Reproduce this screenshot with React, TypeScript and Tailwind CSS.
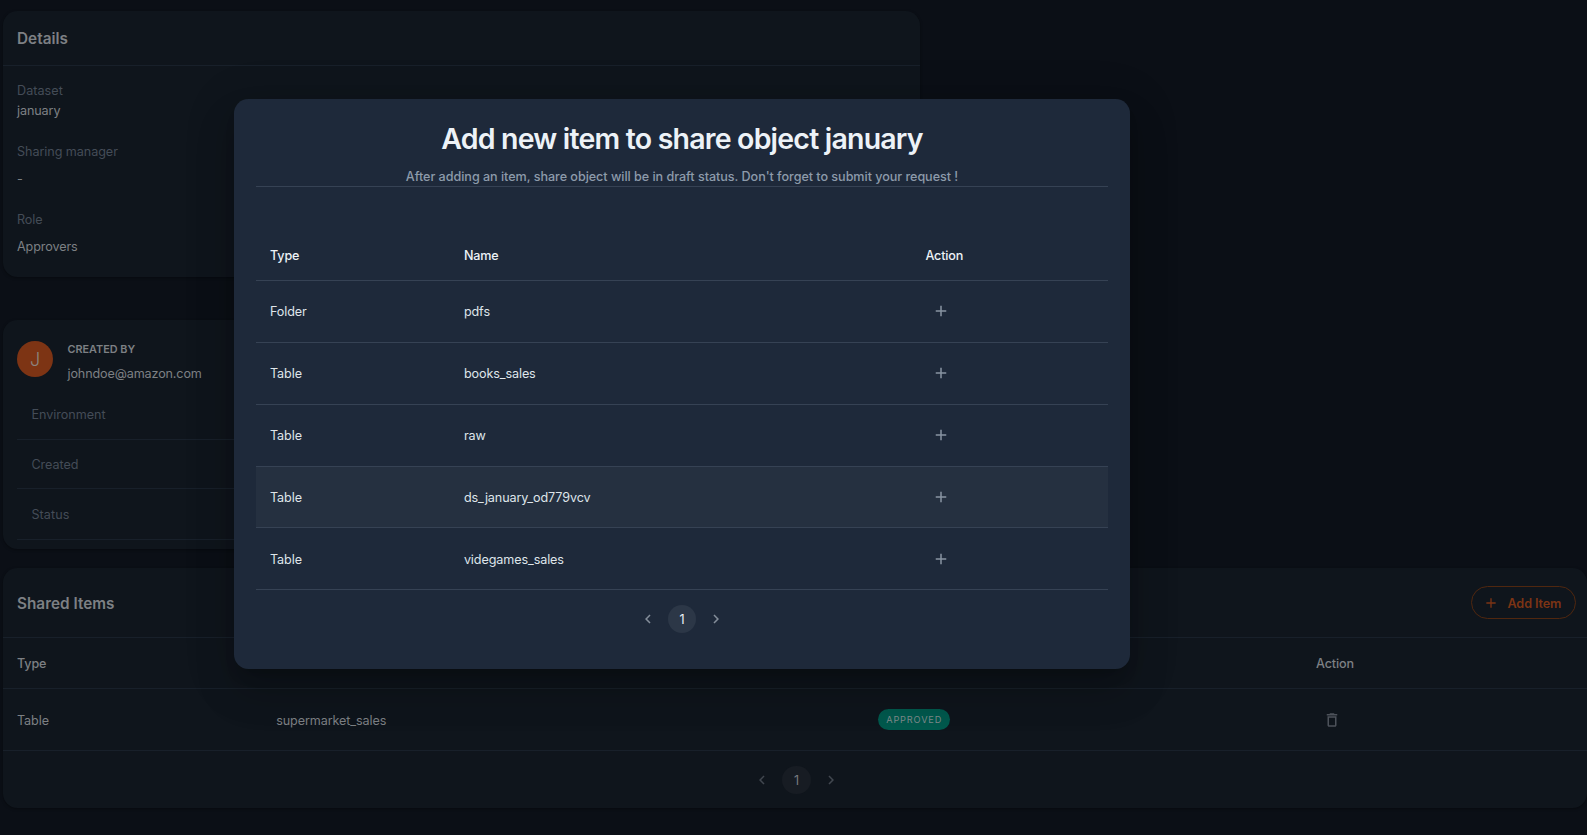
import React from 'react';

const sharedCols = 'grid grid-cols-[259.2px_602px_437.8px_1fr] items-center pl-[14px]';
const modalCols = 'grid grid-cols-[193.9px_461.5px_1fr] items-center pl-[14px]';

function Plus({ className }: { className: string }) {
  return (
    <svg viewBox="0 0 24 24" className={className} fill="currentColor">
      <path d="M19 13h-6v6h-2v-6H5v-2h6V5h2v6h6v2z" />
    </svg>
  );
}

function Trash() {
  return (
    <svg viewBox="0 0 24 24" className="h-[18px] w-[18px]" fill="currentColor">
      <path d="M6 19c0 1.1.9 2 2 2h8c1.1 0 2-.9 2-2V7H6v12zM8 9h8v10H8V9zm7.5-5-1-1h-5l-1 1H5v2h14V4z" />
    </svg>
  );
}

function Pagination({ arrow, circle }: { arrow: string; circle: string }) {
  return (
    <div className="flex items-center justify-center gap-[11px]">
      <svg viewBox="0 0 24 24" className={`h-[18px] w-[18px] ${arrow}`} fill="currentColor">
        <path d="M15.41 7.41L14 6l-6 6 6 6 1.41-1.41L10.83 12z" />
      </svg>
      <div className={`flex h-[28.5px] w-[28.5px] items-center justify-center rounded-full pt-[2px] ${circle}`}>1</div>
      <svg viewBox="0 0 24 24" className={`h-[18px] w-[18px] ${arrow}`} fill="currentColor">
        <path d="M10 6L8.59 7.41 13.17 12l-4.58 4.59L10 18l6-6z" />
      </svg>
    </div>
  );
}

const items = [
  { type: 'Folder', name: 'pdfs', row: 'h-[62px] pb-px' },
  { type: 'Table', name: 'books_sales', row: 'h-[62px] pb-px' },
  { type: 'Table', name: 'raw', row: 'h-[62px] pb-px' },
  { type: 'Table', name: 'ds_january_od779vcv', row: 'h-[61px] bg-[#253040]' },
  { type: 'Table', name: 'videgames_sales', row: 'h-[62px]' },
];

const card = 'rounded-[14.4px] bg-[#0f151c] shadow-[0_1px_3px_rgba(0,0,0,0.35)]';

export default function App() {
  return (
    <div className="relative h-[835px] w-[1587px] overflow-hidden bg-[#0b0f16] pl-[3px] pt-[11px] font-['Inter',sans-serif] text-[12.6px] leading-[20px] tracking-[-0.1px] text-[#7d8084]">
      <section className={`h-[266px] w-[917px] ${card}`}>
        <h2 className="flex h-[55px] items-center border-b border-[#18202a] pl-[14px] pt-[2px] text-[15.3px] font-semibold tracking-[0.02px]">Details</h2>
        <dl className="pl-[14px] pt-[14.5px]">
          <dt className="tracking-[0.04px] text-[#444c57]">Dataset</dt>
          <dd>january</dd>
          <dt className="mt-[21px] tracking-[-0.06px] text-[#444c57]">Sharing manager</dt>
          <dd className="mt-[7px]">-</dd>
          <dt className="mt-[21px] text-[#444c57]">Role</dt>
          <dd className="mt-[7px]">Approvers</dd>
        </dl>
      </section>

      <section className={`mt-[43px] h-[229px] w-[917px] px-[14px] pt-[21px] ${card}`}>
        <div className="flex h-[49px]">
          <div className="flex h-9 w-9 items-center justify-center rounded-full bg-[#7d3414] pt-[2px] text-[18px] font-light text-[#8b8480]">J</div>
          <div className="ml-[14.5px]">
            <div className="mt-[-1px] text-[10.8px] font-semibold tracking-[0.02px]">CREATED BY</div>
            <div className="mt-[4px] tracking-[-0.13px]">johndoe@amazon.com</div>
          </div>
        </div>
        <div className="flex h-[50px] items-center border-b border-[#18202a] pl-[14.4px] tracking-[-0.02px] text-[#444c57]">Environment</div>
        <div className="flex h-[49px] items-center border-b border-[#18202a] pl-[14.4px] pt-[2px] tracking-[-0.05px] text-[#444c57]">Created</div>
        <div className="flex h-[51px] items-center border-b border-[#18202a] pl-[14.4px] pt-[2px] tracking-[0.1px] text-[#444c57]">Status</div>
      </section>

      <section className={`mt-[19px] h-[240px] w-[1584px] ${card}`}>
        <div className="flex h-[70px] items-center justify-between border-b border-[#18202a] pl-[14px] pr-[11px]">
          <h2 className="pt-[2px] text-[15.3px] font-semibold tracking-[0.02px]">Shared Items</h2>
          <button className="flex h-[33px] w-[105px] items-center rounded-full border border-[#50270f] pl-[11px] font-semibold text-[#7d3414]">
            <Plus className="h-[16px] w-[16px]" />
            <span className="ml-[8.5px] pt-[2px]">Add Item</span>
          </button>
        </div>
        <div className={`h-[51px] border-b border-[#18202a] pt-[2px] font-medium tracking-[-0.15px] ${sharedCols}`}>
          <span>Type</span>
          <span>Name</span>
          <span>Status</span>
          <span>Action</span>
        </div>
        <div className={`h-[62px] border-b border-[#18202a] ${sharedCols}`}>
          <span className="pt-[2px]">Table</span>
          <span className="pt-[2px]">supermarket_sales</span>
          <span className="flex h-[21px] w-[72px] items-center justify-center rounded-full bg-[#00594d] text-[9.2px] tracking-[0.85px] text-[#7f8a8b]">APPROVED</span>
          <span className="pl-[7px] text-[#4d525a]"><Trash /></span>
        </div>
        <div className="flex h-[58px] items-center justify-center pl-[3px]">
          <Pagination arrow="text-[#41474f]" circle="bg-[#171c23] text-[#777b80]" />
        </div>
      </section>

      <div className="absolute left-[234px] top-[99px] h-[570px] w-[896px] rounded-[14.4px] bg-[#1e293a] px-[22px] pt-[22px] text-[#dfe5ea] shadow-[0_11px_15px_-7px_rgba(0,0,0,0.2),0_24px_38px_3px_rgba(0,0,0,0.14),0_9px_46px_8px_rgba(0,0,0,0.12)]">
        <h1 className="h-[36px] text-center text-[28.5px] font-semibold leading-[35px] tracking-[-0.8px] text-[#edf2f7]">Add new item to share object january</h1>
        <p className="mt-[9px] h-[21px] border-b border-[#364254] pt-px text-center font-medium tracking-[-0.04px] text-[#8d9bab]">
          After adding an item, share object will be in draft status. Don't forget to submit your request !
        </p>
        <div className={`mt-[43px] h-[51px] border-b border-[#364254] pt-[2px] font-medium tracking-[-0.15px] text-[#edf2f7] ${modalCols}`}>
          <span>Type</span>
          <span>Name</span>
          <span>Action</span>
        </div>
        {items.map((item) => (
          <div key={item.name} className={`border-b border-[#364254] ${modalCols} ${item.row}`}>
            <span className="pt-[2px]">{item.type}</span>
            <span className="pt-[2px]">{item.name}</span>
            <span className="pl-[6.5px] text-[#8994a2]"><Plus className="h-[18px] w-[18px]" /></span>
          </div>
        ))}
        <div className="flex h-[58px] items-center justify-center">
          <Pagination arrow="text-[#848e9a]" circle="bg-[#2c3747] text-[#edf2f7]" />
        </div>
      </div>
    </div>
  );
}
